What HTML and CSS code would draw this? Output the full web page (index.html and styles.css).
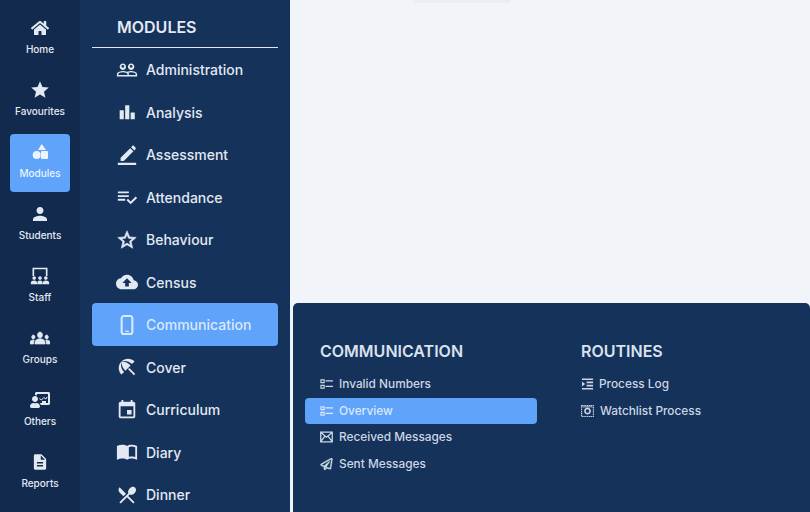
FILE: index.html
```html
<!DOCTYPE html>
<html lang="en">
<head>
    <meta charset="UTF-8">
    <meta name="viewport" content="width=device-width, initial-scale=1.0">
    <title>Modules</title>
    <link rel="stylesheet" href="styles.css">
</head>
<body>

    <!-- main rail -->
    <nav class="rail">
        <a class="rail-item">
            <svg class="rail-icon home" viewBox="0 0 576 512"><path d="M280.37 148.26L96 300.11V464a16 16 0 0 0 16 16l112.06-.29a16 16 0 0 0 15.92-16V368a16 16 0 0 1 16-16h64a16 16 0 0 1 16 16v95.64a16 16 0 0 0 16 16.05L464 480a16 16 0 0 0 16-16V300L295.67 148.26a12.19 12.19 0 0 0-15.3 0zM571.6 251.47L488 182.56V44.05a12 12 0 0 0-12-12h-56a12 12 0 0 0-12 12v72.61L318.47 43a48 48 0 0 0-61 0L4.34 251.47a12 12 0 0 0-1.6 16.9l25.5 31A12 12 0 0 0 45.15 301l235.22-193.74a12.19 12.19 0 0 1 15.3 0L530.9 301a12 12 0 0 0 16.9-1.6l25.5-31a12 12 0 0 0-1.7-16.93z"/></svg>
            <span>Home</span>
        </a>
        <a class="rail-item">
            <svg class="rail-icon grow" viewBox="0 0 24 24"><path d="M12 17.27L18.18 21l-1.64-7.03L22 9.24l-7.19-.61L12 2 9.19 8.63 2 9.24l5.46 4.73L5.82 21z"/></svg>
            <span>Favourites</span>
        </a>
        <a class="rail-item active">
            <svg class="rail-icon" viewBox="0 0 20 20"><path d="M11.7 2L16 8H8z"/><circle cx="6.7" cy="13" r="4"/><rect x="11" y="9" width="7" height="8" rx="1"/></svg>
            <span>Modules</span>
        </a>
        <a class="rail-item">
            <svg class="rail-icon grow" viewBox="0 0 24 24"><path d="M12 12c2.21 0 4-1.79 4-4s-1.79-4-4-4-4 1.79-4 4 1.79 4 4 4zm0 2c-2.67 0-8 1.34-8 4v2h16v-2c0-2.66-5.33-4-8-4z"/></svg>
            <span>Students</span>
        </a>
        <a class="rail-item">
            <svg class="rail-icon" viewBox="0 0 24 24"><path d="M3 2h18v10h-2V4H5v8H3z"/><circle cx="5" cy="14.500" r="2.200"/><circle cx="12" cy="14.500" r="2.200"/><circle cx="19" cy="14.500" r="2.200"/><path d="M1 22v-2c0-1.700 2-2.500 4-2.500s3.300.8 3.500 2.500v2zM8.800 22v-2c.2-1.700 1.400-2.500 3.200-2.500s3 .8 3.200 2.500v2zM15.500 22v-2c.2-1.700 1.500-2.500 3.500-2.500s4 .8 4 2.500v2z"/></svg>
            <span>Staff</span>
        </a>
        <a class="rail-item">
            <svg class="rail-icon tall" viewBox="0 0 24 24"><path class="heavy" d="M12 12.750c1.630 0 3.070.39 4.240.9 1.080.48 1.760 1.560 1.760 2.730V18H6v-1.610c0-1.180.68-2.260 1.760-2.730 1.170-.52 2.610-.91 4.240-.91zM4 13c1.100 0 2-.9 2-2s-.9-2-2-2-2 .9-2 2 .9 2 2 2zm1.130 1.100c-.37-.06-.74-.1-1.130-.1-.99 0-1.930.21-2.780.58C.48 14.900 0 15.620 0 16.430V18h4.500v-1.610c0-.83.23-1.610.63-2.290zM20 13c1.100 0 2-.9 2-2s-.9-2-2-2-2 .9-2 2 .9 2 2 2zm4 3.430c0-.81-.48-1.530-1.220-1.850-.85-.37-1.790-.58-2.780-.58-.39 0-.76.04-1.130.1.4.68.63 1.460.63 2.290V18H24v-1.570zM12 6c1.660 0 3 1.340 3 3s-1.340 3-3 3-3-1.340-3-3 1.340-3 3-3z"/></svg>
            <span>Groups</span>
        </a>
        <a class="rail-item">
            <svg class="rail-icon" viewBox="0 0 640 512"><path d="M208 352c-2.390 0-4.780.35-7.060 1.090C187.980 357.300 174.350 360 160 360c-14.350 0-27.980-2.700-40.950-6.910-2.280-.74-4.660-1.090-7.050-1.090C49.940 352-.33 402.480 0 464.620.14 490.880 21.730 512 48 512h224c26.270 0 47.860-21.120 48-47.380.33-62.140-49.940-112.620-112-112.620zm-48-32c53.020 0 96-42.980 96-96s-42.980-96-96-96-96 42.980-96 96 42.980 96 96 96zM592 0H208c-26.470 0-48 22.250-48 49.590V96c23.420 0 45.100 6.780 64 17.800V64h352v288h-64v-64H384v64h-76.240c19.100 16.690 33.120 38.730 39.690 64H592c26.470 0 48-22.250 48-49.590V49.590C640 22.250 618.470 0 592 0z"/><path class="zigzag" d="M300 215l70 40 70-80 70 50 40-70"/></svg>
            <span>Others</span>
        </a>
        <a class="rail-item">
            <svg class="rail-icon shrink" viewBox="0 0 24 24"><path d="M14 2H6c-1.100 0-2 .9-2 2v16c0 1.100.9 2 2 2h12c1.100 0 2-.9 2-2V8l-6-6zm2 16H8v-2h8v2zm0-4H8v-2h8v2zm-3-5V3.500L18.500 9H13z"/></svg>
            <span>Reports</span>
        </a>
    </nav>

    <!-- module list -->
    <aside class="modules">
        <h2 class="modules-title">MODULES</h2>
        <ul class="module-list">
            <li class="module"><svg viewBox="0 0 24 24"><path d="M16.500 13c-1.200 0-3.070.34-4.500 1-1.430-.67-3.300-1-4.500-1C5.330 13 1 14.080 1 16.250V19h22v-2.750c0-2.170-4.330-3.250-6.500-3.250zm-4 4.500h-10v-1.250c0-.54 2.560-1.750 5-1.750s5 1.210 5 1.750v1.250zm9 0H14v-1.250c0-.46-.2-.86-.52-1.220.88-.3 1.960-.53 3.020-.53 2.440 0 5 1.210 5 1.750v1.250zM7.500 12c1.930 0 3.500-1.570 3.500-3.500S9.430 5 7.500 5 4 6.570 4 8.500 5.570 12 7.500 12zm0-5.500c.83 0 1.500.67 1.500 1.500s-.67 1.500-1.500 1.500S6 8.830 6 8s.67-1.500 1.500-1.500zm9 5.500c1.930 0 3.500-1.570 3.500-3.500S18.430 5 16.500 5 13 6.570 13 8.500s1.570 3.500 3.500 3.500zm0-5.500c.83 0 1.500.67 1.500 1.500s-.67 1.500-1.500 1.500S15 8.830 15 8s.67-1.500 1.500-1.500z"/></svg>Administration</li>
            <li class="module"><svg viewBox="0 0 24 24"><path d="M4 10h4.500v10H4zM10 4.500h4.500V20H10zM16 12.500h4.500V20H16z"/></svg>Analysis</li>
            <li class="module"><svg viewBox="0 0 24 24"><path d="M22 23H2v-2.500h20V23zM5 18.500V15L15.500 4.500 19 8 8.500 18.500zM16.500 3.500L18 2c.4-.4 1-.4 1.400 0l2 2c.4.4.4 1 0 1.400L20 7z"/></svg>Assessment</li>
            <li class="module"><svg viewBox="0 0 24 24"><path d="M14 10H2v2h12v-2zm0-4H2v2h12V6zM2 16h8v-2H2v2zm19.500-4.500L23 13l-6.990 7-4.510-4.500L13 14l3.010 3 5.490-5.500z"/></svg>Attendance</li>
            <li class="module"><svg viewBox="0 0 24 24"><path class="heavy" d="M22 9.240l-7.190-.62L12 2 9.190 8.630 2 9.240l5.460 4.730L5.820 21 12 17.270 18.180 21l-1.630-7.030L22 9.240zM12 15.400l-3.760 2.270 1-4.280-3.320-2.880 4.380-.38L12 6.100l1.710 4.040 4.380.38-3.320 2.880 1 4.280L12 15.400z"/></svg>Behaviour</li>
            <li class="module"><svg viewBox="0 0 24 24"><path d="M19.350 10.040C18.670 6.590 15.640 4 12 4 9.110 4 6.600 5.640 5.350 8.040 2.340 8.360 0 10.910 0 14c0 3.310 2.690 6 6 6h13c2.760 0 5-2.240 5-5 0-2.640-2.050-4.780-4.650-4.960zM14 13v4h-4v-4H7l5-5 5 5h-3z"/></svg>Census</li>
            <li class="module active"><svg viewBox="0 0 24 24"><path d="M8.500 1h7C17.400 1 19 2.600 19 4.500v15c0 1.900-1.600 3.500-3.500 3.500h-7C6.600 23 5 21.400 5 19.500v-15C5 2.600 6.600 1 8.500 1zM7.300 4.500v15c0 .7.500 1.200 1.200 1.200h7c.7 0 1.200-.5 1.200-1.200v-15c0-.7-.5-1.200-1.200-1.200h-7c-.7 0-1.200.5-1.200 1.200zM10 18.300h4v1.400h-4z"/></svg>Communication</li>
            <li class="module"><svg viewBox="0 0 24 24"><path d="M13.127 14.560l1.430-1.430 6.440 6.443L19.570 21zm4.293-5.730l2.860-2.860c-3.950-3.950-10.350-3.960-14.300-.02 3.930-1.300 8.310-.25 11.440 2.880zM5.950 5.980c-3.940 3.950-3.930 10.350.02 14.300l2.860-2.860C5.700 14.290 4.650 9.910 5.950 5.980zm.02-.02l-.01.01c-.38 3.010 1.170 6.880 4.300 10.020l5.730-5.730c-3.130-3.130-7.010-4.680-10.020-4.300z"/></svg>Cover</li>
            <li class="module"><svg viewBox="0 0 24 24"><path d="M17 12h-5v5h5v-5zM16 1v2H8V1H6v2H5c-1.110 0-1.990.9-1.990 2L3 19c0 1.100.89 2 2 2h14c1.100 0 2-.9 2-2V5c0-1.100-.9-2-2-2h-1V1h-2zm3 18H5V8h14v11z"/></svg>Curriculum</li>
            <li class="module"><svg viewBox="0 0 24 24"><path d="M1 5.500C3 4.500 5 4 7 4c2 0 3.800.5 5 1.500v15c-1.200-1-3-1.500-5-1.500-2 0-3.800.4-6 1.500zM12 5.500C13.200 4.500 15 4 17 4c2 0 4 .5 6 1.500v15c-2.200-1.100-4-1.500-6-1.500-2 0-3.800.5-5 1.500zM14 6.800v10.500c.9-.3 1.900-.4 3-.4 1.100 0 2.100.1 4 .6V6.800C19.500 6.300 18.200 6 17 6c-1.200 0-2.200.3-3 .8z"/></svg>Diary</li>
            <li class="module"><svg viewBox="0 0 24 24"><path d="M8.100 13.340l2.830-2.830L3.910 3.500c-1.560 1.560-1.560 4.090 0 5.660l4.190 4.180zm6.780-1.810c1.530.71 3.680.21 5.270-1.380 1.910-1.910 2.280-4.650.81-6.120-1.460-1.460-4.200-1.100-6.120.81-1.590 1.590-2.090 3.740-1.380 5.270L3.700 19.870l1.410 1.410L12 14.410l6.880 6.880 1.410-1.410L13.410 13l1.470-1.470z"/></svg>Dinner</li>
        </ul>
    </aside>

    <main class="content">
        <div class="top-shade"></div>
        <div class="blank"></div>

        <!-- flyout for the selected module -->
        <section class="flyout">
            <div class="fly-col">
                <h3>COMMUNICATION</h3>
                <a class="fly-link"><svg viewBox="0 0 14 12"><path class="line" d="M1 1.500h3.500v3H1zM1 7.500h3.500v3H1z"/><path d="M6 2h8v1.300H6zM6 8h8v1.300H6z"/></svg>Invalid Numbers</a>
                <a class="fly-link active"><svg viewBox="0 0 14 12"><path class="line" d="M1 1.500h3.500v3H1zM1 7.500h3.500v3H1z"/><path d="M6 2h8v1.300H6zM6 8h8v1.300H6z"/></svg>Overview</a>
                <a class="fly-link"><svg viewBox="0 0 14 12"><path class="line thick" d="M.8.800h12.400v10.400H.8zM1 1.200l6 5 6-5M1 10.800l4.200-5.500M13 10.800l-4.200-5.500"/></svg>Received Messages</a>
                <a class="fly-link"><svg viewBox="0 0 512 512"><path class="plane" d="M440 6.500L24 246.400c-34.400 19.900-31.100 70.800 5.700 85.900L144 379.600V464c0 46.400 59.200 65.500 86.600 28.600l43.800-59.100 111.900 46.200c5.900 2.400 12.100 3.600 18.300 3.600 8.200 0 16.300-2.100 23.600-6.200 12.800-7.200 21.600-20 23.900-34.500l59.400-387.200c6.100-40.100-36.900-68.800-71.500-48.900zM192 464v-64.600l36.600 15.100L192 464zm212.600-28.700l-153.800-63.500L391 169.500c10.700-15.500-9.500-33.500-23.700-21.200L155.800 332.600 48 288 464 48l-59.400 387.300z"/></svg>Sent Messages</a>
            </div>
            <div class="fly-col">
                <h3>ROUTINES</h3>
                <a class="fly-link tight"><svg viewBox="0 0 14 12"><path d="M1 0h12v1.700H1zM6 3.400h7v1.700H6zM6 6.900h7v1.700H6zM1 10.300h12V12H1zM1 3.400L4.500 6 1 8.600z"/></svg>Process Log</a>
                <a class="fly-link"><svg viewBox="0 0 14 13"><path class="line dash" d="M.6.600h12.800v11.800H.6z"/><path class="line gear" d="M7 3.700a2.800 2.800 0 1 0 .01 0z"/><path d="M1.500 1.500h11v1h-11z"/></svg>Watchlist Process</a>
            </div>
        </section>
    </main>

</body>
</html>
```

FILE: styles.css
```css
/* page */
body {
    margin: 0;
    display: flex;
    height: 512px;
    overflow: hidden;
    font-family: "Inter", "Liberation Sans", sans-serif;
    background-color: #f1f4f8;
    color: #e2e9f3;
}

svg {
    fill: currentColor;
    flex-shrink: 0;
}

/* rail */
.rail {
    width: 80px;
    flex-shrink: 0;
    box-sizing: border-box;
    padding: 10px 10px 0;
    display: flex;
    flex-direction: column;
    gap: 4px;
    background-color: #132a4f;
}

.rail-item {
    height: 58px;
    box-sizing: border-box;
    padding-top: 8px;
    display: flex;
    flex-direction: column;
    align-items: center;
    gap: 4px;
    border-radius: 4px;
    font-size: 10px;
    font-weight: 500;
    line-height: 14px;
    white-space: nowrap;
}

.rail-item.active {
    background-color: #5fa3fb;
    color: #edf4fe;
}

.rail-icon {
    width: 20px;
    height: 20px;
}

.rail-icon.home {
    width: 18px;
}

.rail-icon.grow {
    transform: scale(1.05);
}

.rail-icon.shrink {
    transform: scale(0.92);
}

.rail-icon.tall {
    transform: scale(1, 1.2);
}

.zigzag {
    fill: none;
    stroke: currentColor;
    stroke-width: 32;
}

.heavy {
    stroke: currentColor;
    stroke-width: 0.7;
}

/* module list */
.modules {
    width: 210px;
    flex-shrink: 0;
    box-sizing: border-box;
    padding: 0 12px;
    background-color: #15325a;
}

.modules-title {
    margin: 0;
    height: 48px;
    box-sizing: border-box;
    padding: 18px 0 0 25px;
    font-size: 16px;
    font-weight: 600;
    line-height: 19px;
    border-bottom: 1px solid #dfe6f0;
}

.module-list {
    list-style: none;
    margin: 0;
    padding: 0.4px 0 0;
}

.module {
    height: 42.5px;
    display: flex;
    align-items: center;
    gap: 8px;
    padding-left: 24px;
    border-radius: 4px;
    font-size: 14px;
    font-weight: 500;
}

.module svg {
    width: 22px;
    height: 22px;
}

.module.active {
    background-color: #5fa3fb;
    color: #dbe9fc;
}

/* right side */
.content {
    flex: 1;
    min-width: 0;
    display: flex;
    flex-direction: column;
}

.top-shade {
    width: 97px;
    height: 3px;
    margin-left: 123px;
    background-color: #ebedf1;
}

.blank {
    flex: 1;
}

.flyout {
    height: 209px;
    flex-shrink: 0;
    box-sizing: border-box;
    margin-left: 3px;
    padding: 39px 0 0 12px;
    display: flex;
    gap: 29px;
    border-radius: 5px 5px 0 0;
    background-color: #15325a;
}

.fly-col {
    width: 232px;
}

.fly-col h3 {
    margin: 0 0 10px 15px;
    font-size: 16px;
    font-weight: 600;
    line-height: 19px;
    color: #d9e2ee;
}

.fly-link {
    height: 26.55px;
    display: flex;
    align-items: center;
    gap: 6px;
    padding-left: 15px;
    border-radius: 4px;
    font-size: 11.85px;
    font-weight: 500;
    color: #ccd7e5;
    white-space: nowrap;
}

.fly-link.tight {
    gap: 5px;
}

.fly-link svg {
    width: 13px;
    height: 12px;
}

.fly-link.active {
    background-color: #5fa3fb;
    color: #dbe9fc;
}

.line {
    fill: none;
    stroke: currentColor;
    stroke-width: 1.2;
}

.line.thick {
    stroke-width: 1.4;
}

.line.dash {
    stroke-dasharray: 1.4 0.6;
}

.line.gear {
    stroke-width: 1.8;
}

.plane {
    stroke: currentColor;
    stroke-width: 16;
}
```
